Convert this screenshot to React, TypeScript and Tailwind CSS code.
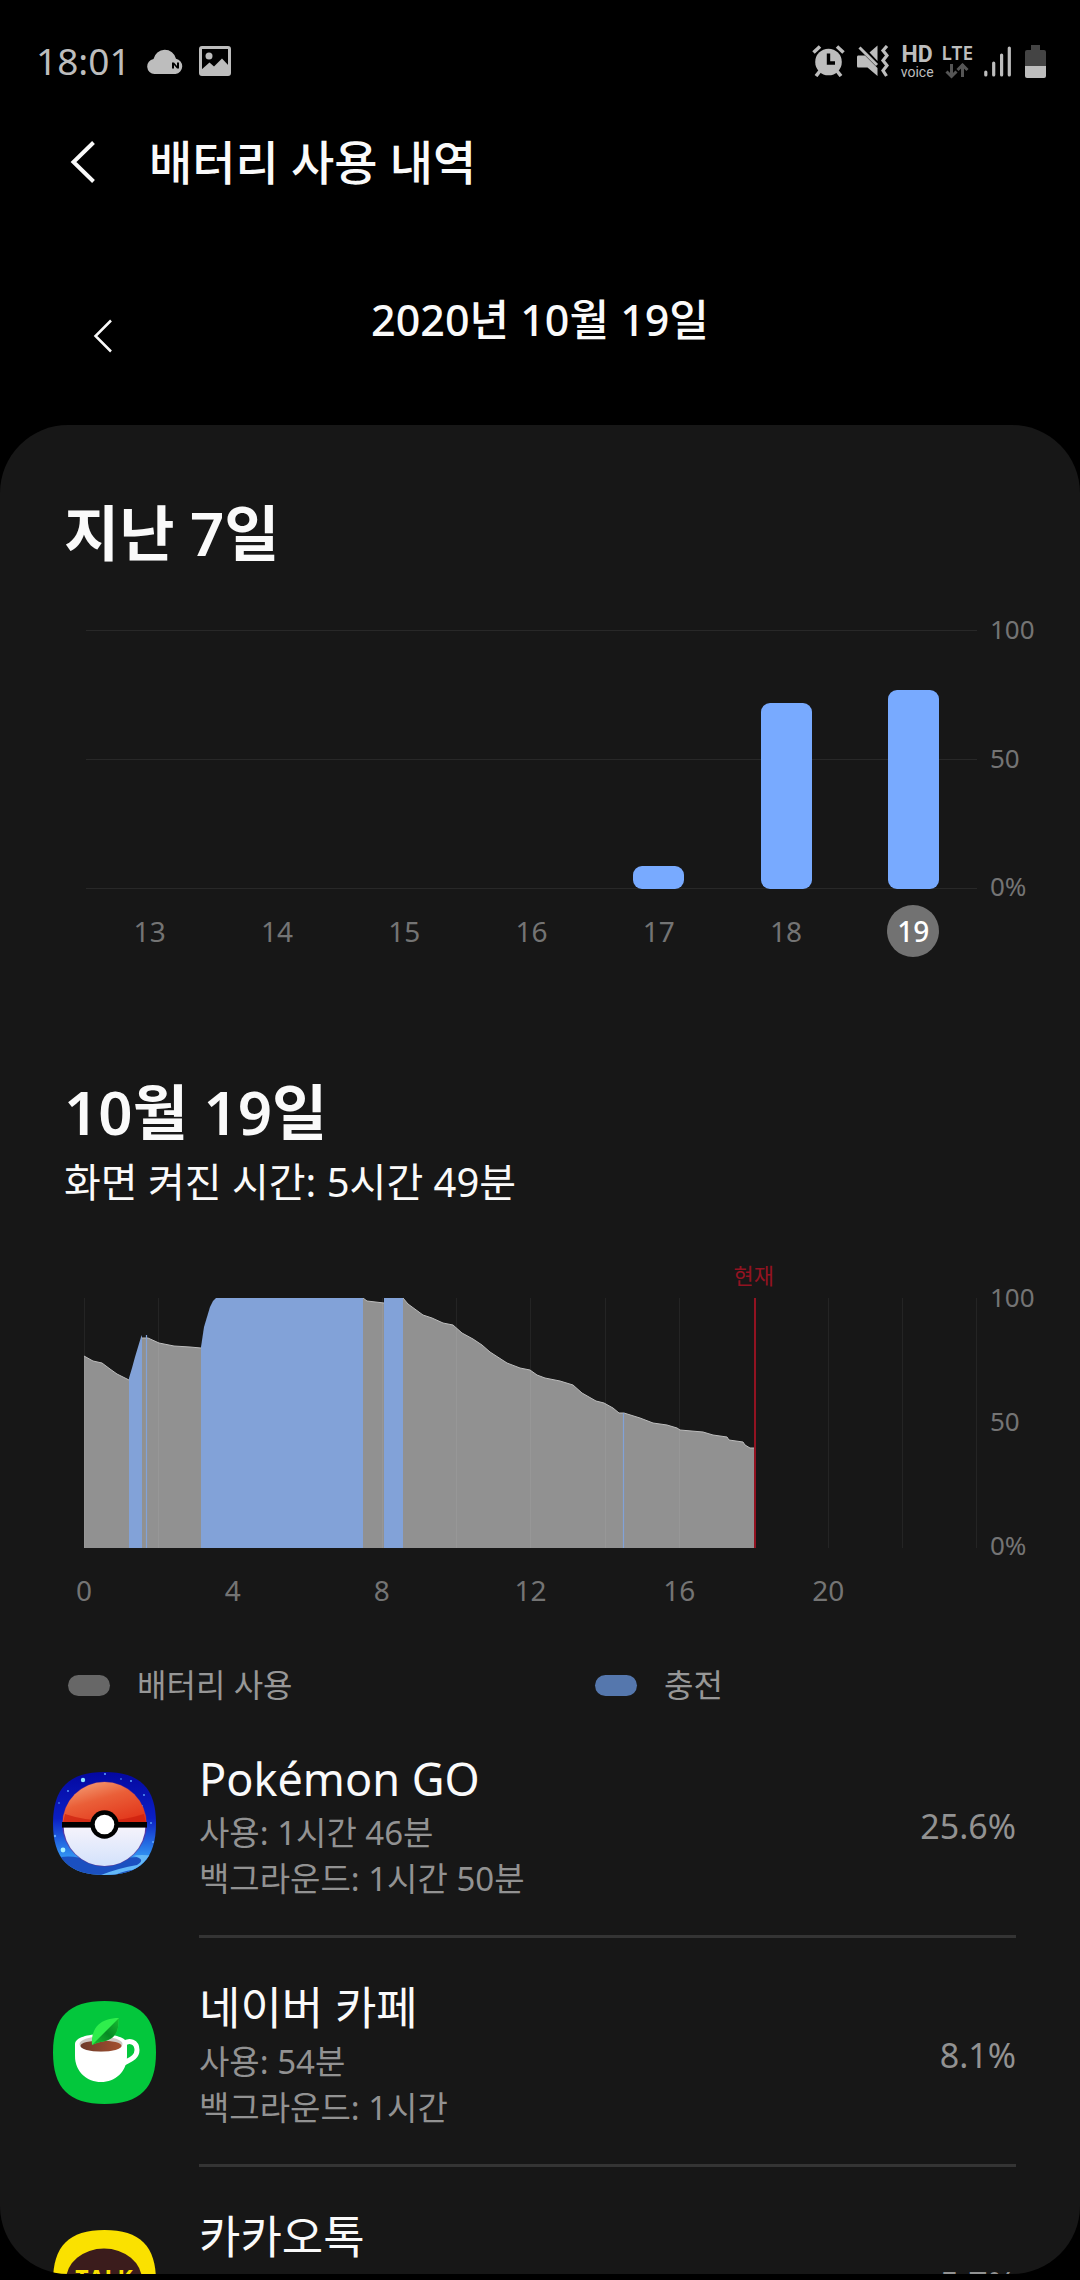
import type { ReactNode } from "react";

const days = [
  { day: 13, value: 0 },
  { day: 14, value: 0 },
  { day: 15, value: 0 },
  { day: 16, value: 0 },
  { day: 17, value: 9 },
  { day: 18, value: 72 },
  { day: 19, value: 77 },
];

const hourLabels = ["0", "4", "8", "12", "16", "20"];

const drain = [
  "0,58 9,63 18,65 26,71 33,76 45,82",
  "58,40 62,40 64,40 75,45 90,48 106,49 117,50",
  "279,0 283,3 300,5",
  "319,0 324,6 339,17 348,20 359,25 369,27 378,35 389,41 398,47 406,54 423,65 436,70 446,72 453,77 461,80 476,83 489,87 498,95 512,103 520,105 529,110 535,115 540,115 556,120 569,125 583,127 593,130 596,132 619,134 629,137 643,139 645,142 659,144 661,147 666,150 671,150",
];

const charge = [
  "45,80 48,70 51,59 54,49 57,39 58,37 58,40",
  "117,49 120,29 123,19 126,9 129,3 132,0 279,0",
  "300,0 319,0",
];

function area(points: string) {
  const list = points.split(" ");
  const first = list[0].split(",")[0];
  const last = list[list.length - 1].split(",")[0];
  return `${first},250 ${points} ${last},250`;
}

const squircle =
  "M51.5 0C87 0 103 16 103 51.5S87 103 51.5 103 0 87 0 51.5 16 0 51.5 0Z";

function PokemonIcon() {
  return (
    <svg viewBox="0 0 103 103" className="size-full" aria-hidden="true">
      <defs>
        <linearGradient id="sky" x1="0" y1="0" x2="0" y2="1">
          <stop offset="0" stopColor="#0408a0" />
          <stop offset="0.45" stopColor="#0b1fc4" />
          <stop offset="0.8" stopColor="#2f8df0" />
          <stop offset="1" stopColor="#4db4f8" />
        </linearGradient>
        <linearGradient id="ballTop" x1="0.1" y1="0" x2="0.7" y2="1">
          <stop offset="0" stopColor="#f5a57c" />
          <stop offset="0.45" stopColor="#ea5f38" />
          <stop offset="1" stopColor="#e2351a" />
        </linearGradient>
        <linearGradient id="ballBottom" x1="0" y1="0" x2="0" y2="1">
          <stop offset="0" stopColor="#f7f4fc" />
          <stop offset="1" stopColor="#d3e2fb" />
        </linearGradient>
        <clipPath id="pokeClip">
          <path d={squircle} />
        </clipPath>
      </defs>
      <g clipPath="url(#pokeClip)">
        <rect width="103" height="103" fill="url(#sky)" />
        <path d="M0 86Q20 82 34 88L103 84V103H0Z" fill="#1b50c0" />
        <path d="M103 84Q86 82 80 84Q94 87 84 93Q66 96 48 103H62Q72 98 88 97L70 103H92L103 92Z" fill="#62b8f8" />
        <g fill="#5ea8ff">
          <circle cx="30" cy="8" r="2.2" fill="#8fe6ff" />
          <circle cx="10" cy="78" r="2.4" fill="#a6f1ff" />
          <circle cx="52" cy="2" r="1" />
          <circle cx="68" cy="7" r="0.8" />
          <circle cx="78" cy="9" r="1" />
          <circle cx="15" cy="19" r="0.9" />
          <circle cx="91" cy="23" r="0.9" />
          <circle cx="89" cy="34" r="0.9" />
          <circle cx="6" cy="31" r="0.8" />
          <circle cx="2" cy="64" r="1.2" />
          <circle cx="98" cy="51" r="0.9" />
          <circle cx="100" cy="70" r="1" />
        </g>
      </g>
      <circle cx="51.5" cy="52" r="42.5" fill="#7c2c84" opacity="0.6" />
      <path d="M9.5 52a42 42 0 0 1 84 0Z" fill="url(#ballTop)" />
      <path d="M12 42Q51 55 91 42L93 51H10Z" fill="#c91c0c" opacity="0.65" />
      <path d="M10.5 53a41 41 0 0 0 82 0Z" fill="url(#ballBottom)" />
      <rect x="9" y="50" width="85" height="5.6" fill="#000" />
      <circle cx="51.5" cy="52.5" r="14.2" fill="#000" />
      <circle cx="51.5" cy="52.5" r="9.8" fill="#fff" />
    </svg>
  );
}

function CafeIcon() {
  return (
    <svg viewBox="0 0 103 103" className="size-full" aria-hidden="true">
      <defs>
        <linearGradient id="coffee" x1="0" y1="0" x2="1" y2="0">
          <stop offset="0" stopColor="#6e3a2b" />
          <stop offset="1" stopColor="#a4502f" />
        </linearGradient>
        <linearGradient id="leafDark" x1="0" y1="1" x2="1" y2="0">
          <stop offset="0" stopColor="#17c22f" />
          <stop offset="0.5" stopColor="#078a24" />
          <stop offset="1" stopColor="#16bf31" />
        </linearGradient>
      </defs>
      <path d={squircle} fill="#03c73c" />
      <path d="M71 43C76 38 84 41 84 49C84 57 76 59 71 62" fill="none" stroke="#fff" strokeWidth="5" />
      <path d="M22 43C22 30 74 30 74 43V55C74 71 62 81 48 81S22 71 22 55Z" fill="#fff" />
      <ellipse cx="48" cy="43" rx="21.5" ry="7.5" fill="#cfc8c4" />
      <ellipse cx="48" cy="45" rx="20.5" ry="5.5" fill="url(#coffee)" />
      <path d="M39 44C38 26 48 17 66 17C65 25 66 30 60 36C55 41 46 40 39 44Z" fill="#2fee4c" />
      <path d="M39 44L66 17C65 25 66 30 60 36C55 41 46 40 39 44Z" fill="url(#leafDark)" />
    </svg>
  );
}

function TalkIcon() {
  return (
    <svg viewBox="0 0 103 103" className="size-full" aria-hidden="true">
      <path d={squircle} fill="#fae100" />
      <ellipse cx="51" cy="50" rx="38" ry="31.5" fill="#3b1c1c" />
      <path d="M34 74L30 92L52 78Z" fill="#3b1c1c" />
      <text
        x="51"
        y="57"
        textAnchor="middle"
        fontFamily="Open Sans, sans-serif"
        fontSize="23"
        fontWeight="700"
        fill="#fae100"
      >
        TALK
      </text>
    </svg>
  );
}

const apps: { name: string; used: string; background: string; share: string; icon: ReactNode }[] = [
  {
    name: "Pokémon GO",
    used: "사용: 1시간 46분",
    background: "백그라운드: 1시간 50분",
    share: "25.6%",
    icon: <PokemonIcon />,
  },
  {
    name: "네이버 카페",
    used: "사용: 54분",
    background: "백그라운드: 1시간",
    share: "8.1%",
    icon: <CafeIcon />,
  },
  {
    name: "카카오톡",
    used: "사용: 28분",
    background: "백그라운드: 12분",
    share: "5.7%",
    icon: <TalkIcon />,
  },
];

function StatusBar() {
  return (
    <div className="flex h-[122px] shrink-0 items-center justify-between pl-9 pr-[34px] text-[#bdbdbd]">
      <div className="flex items-center">
        <span className="text-[37px] leading-[48px]">18:01</span>
        <svg className="ml-4 h-[26px] w-9" viewBox="0 0 36 26" aria-hidden="true">
          <path
            d="M7.5 26A7.5 7.5 0 0 1 6.500 11.100A11.500 11.500 0 0 1 29 10.800A7.700 7.700 0 0 1 28.500 26Z"
            fill="currentColor"
          />
          <path d="M25 14.500H27L30 18V14.500H32V20.500H30L27 17V20.500H25Z" fill="#000" />
        </svg>
        <svg className="ml-4 h-[30px] w-8" viewBox="0 0 32 30" aria-hidden="true">
          <rect x="1.500" y="1.500" width="29" height="27" rx="1.500" fill="none" stroke="currentColor" strokeWidth="3" />
          <circle cx="10" cy="10" r="3.500" fill="currentColor" />
          <path d="M2 24L10.500 16.500L15 20.500L23 12.500L30 20V28H2Z" fill="currentColor" />
        </svg>
      </div>
      <div className="flex items-center">
        <svg className="h-8 w-[33px]" viewBox="0 0 33 32" fill="none" stroke="currentColor" aria-hidden="true">
          <circle cx="16.500" cy="17" r="13.300" fill="currentColor" stroke="none" />
          <path d="M1.500 7.500L8 1.500M31.500 7.500L25 1.500" strokeWidth="3.600" />
          <path d="M8 26L4 31M25 26L29 31" strokeWidth="3.600" />
          <path d="M16.500 8.500V18H23" stroke="#000" strokeWidth="3.400" />
        </svg>
        <svg className="ml-3 h-8 w-8" viewBox="0 0 32 32" aria-hidden="true">
          <path d="M1 10.500H8L20.500 23V31L10.500 22.500H1Q0 22.500 0 21V12Q0 10.500 1 10.500Z" fill="currentColor" />
          <path d="M2.500 2.500L20 20" stroke="currentColor" strokeWidth="3" />
          <path d="M20.500 0.500V16L12.500 7.500Z" fill="currentColor" />
          <path
            d="M30 1L26 5.500L30 10.500L26 15.500L30 20.500L26 25.500L29.500 31"
            fill="none"
            stroke="currentColor"
            strokeWidth="3.200"
          />
        </svg>
        <div className="ml-3 flex flex-col items-center font-[Roboto]">
          <span className="text-[23px] font-bold leading-[22px]">HD</span>
          <span className="text-[14px] leading-3">voice</span>
        </div>
        <div className="ml-2 flex flex-col items-center">
          <span className="text-[19px] font-semibold leading-[18px]">LTE</span>
          <svg className="mt-px h-4 w-6" viewBox="0 0 24 16" fill="none" stroke="#555" strokeWidth="3" aria-hidden="true">
            <path d="M6.500 1V14M1.500 8.500L6.500 13.500L11.500 8.500M17.500 14V1M12.500 7L17.500 2L22.500 7" />
          </svg>
        </div>
        <svg className="ml-[11px] h-[31px] w-[27px]" viewBox="0 0 27 31" stroke="currentColor" strokeWidth="3.200" strokeLinecap="round" aria-hidden="true">
          <path d="M1.800 26V29M9.700 17V29M17.600 9V29M25.300 2V29" />
        </svg>
        <svg className="ml-[14px] h-[33px] w-[21px]" viewBox="0 0 21 33" aria-hidden="true">
          <path d="M6 0H15V5H19Q21 5 21 7V21H0V7Q0 5 2 5H6Z" fill="#444" />
          <path d="M0 21H21V31Q21 33 19 33H2Q0 33 0 31Z" fill="currentColor" />
        </svg>
      </div>
    </div>
  );
}

function ScaleLabels() {
  return (
    <div className="-mb-3 -mt-4 flex w-[103px] shrink-0 flex-col justify-between pl-[13px] text-[26px] leading-[30px] text-[#747474]">
      <span>100</span>
      <span>50</span>
      <span>0%</span>
    </div>
  );
}

function WeekChart() {
  return (
    <div className="mt-[61px] pl-[86px]">
      <div className="flex h-[259px]">
        <div className="relative flex-1">
          <div className="absolute inset-0 flex flex-col justify-between">
            <div className="h-px bg-[#282828]" />
            <div className="h-px bg-[#282828]" />
            <div className="h-px bg-[#282828]" />
          </div>
          <div className="relative grid h-full grid-cols-7">
            {days.map(({ day, value }) => (
              <div key={day} className="flex h-full items-end justify-center">
                {value > 0 && (
                  <div className="w-[51px] rounded-[9px] bg-[#78aaff]" style={{ height: `${value}%` }} />
                )}
              </div>
            ))}
          </div>
        </div>
        <ScaleLabels />
      </div>
      <div className="mr-[103px] mt-4 grid grid-cols-7 justify-items-center text-[28px] text-[#747474]">
        {days.map(({ day }) => (
          <button
            key={day}
            type="button"
            className={
              day === 19
                ? "size-[52px] rounded-full bg-[#727272] font-medium text-white"
                : "size-[52px] rounded-full"
            }
          >
            {day}
          </button>
        ))}
      </div>
    </div>
  );
}

function DayChart() {
  return (
    <div className="mt-[86px] pl-[84px]">
      <div className="flex h-[250px]">
        <div className="relative flex-1">
          <svg className="h-full w-full" viewBox="0 0 893 250" preserveAspectRatio="none" aria-hidden="true">
            {drain.map((p) => (
              <g key={p}>
                <polygon points={area(p)} fill="#919191" />
                <polyline points={p} fill="none" stroke="#bcbcbc" strokeWidth="1" />
              </g>
            ))}
            {[0, 1, 2, 3, 4, 5, 6, 7, 8, 9, 10, 11, 12].map((n) => (
              <rect key={n} x={Math.round(n * 74.4) - (n === 12 ? 1 : 0)} y="0" width="1" height="250" fill="#fff" opacity="0.06" />
            ))}
            {charge.map((p) => (
              <polygon key={p} points={area(p)} fill="#82a2d8" />
            ))}
            <path d="M62.500 37V250M539.500 115V250" stroke="#82a2d8" strokeWidth="1.200" />
            <rect x="670" y="0" width="2" height="250" fill="#921321" />
          </svg>
          <span className="absolute bottom-full left-3/4 mb-2 -translate-x-1/2 text-[22px] leading-[30px] text-[#921321]">
            현재
          </span>
        </div>
        <ScaleLabels />
      </div>
      <div className="mr-[103px] mt-[22px] grid grid-cols-6 text-[28px] leading-[40px] text-[#747474]">
        {hourLabels.map((h) => (
          <div key={h} className="flex w-0 justify-center">
            {h}
          </div>
        ))}
      </div>
    </div>
  );
}

export default function App() {
  return (
    <div className="flex h-screen flex-col bg-black pb-[6px] font-['Noto_Sans','Noto_Sans_CJK_KR',sans-serif] text-[#fafafa]">
      <StatusBar />
      <header className="flex h-20 shrink-0 items-center">
        <button type="button" aria-label="뒤로" className="ml-[53px] flex size-[60px] items-center justify-center">
          <svg className="h-[42px] w-[26px]" viewBox="0 0 26 42" fill="none" stroke="currentColor" strokeWidth="4" aria-hidden="true">
            <path d="M23.500 1.500L3.500 21L23.500 40.500" />
          </svg>
        </button>
        <h1 className="ml-9 text-[47px] font-medium leading-[60px]">배터리 사용 내역</h1>
      </header>
      <div className="grid h-[223px] shrink-0 grid-cols-[1fr_auto_1fr] items-start pt-[88px]">
        <button type="button" aria-label="이전" className="ml-[73px] mt-4 flex size-[60px] items-center justify-center">
          <svg className="h-[34px] w-5" viewBox="0 0 20 34" fill="none" stroke="currentColor" strokeWidth="2.500" aria-hidden="true">
            <path d="M18 1.500L2.500 17L18 32.500" />
          </svg>
        </button>
        <p className="text-[43px] font-medium leading-[60px]">2020년 10월 19일</p>
      </div>
      <main className="min-h-0 flex-1 overflow-y-auto rounded-[68px] bg-[#171717] pt-[72px] [scrollbar-width:none]">
        <h2 className="pl-16 text-[60px] font-semibold leading-[72px]">지난 7일</h2>
        <WeekChart />
        <h2 className="mt-[119px] pl-16 text-[60px] font-semibold leading-[72px]">10월 19일</h2>
        <p className="mt-1 pl-16 text-[40px] leading-[60px]">화면 켜진 시간: 5시간 49분</p>
        <DayChart />
        <div className="mt-[52px] grid h-[46px] grid-cols-2 items-center pl-[68px] text-[32px] leading-[46px] text-[#979797]">
          <div className="flex items-center gap-[27px]">
            <span className="h-[21px] w-[42px] rounded-full bg-[#676767]" />
            배터리 사용
          </div>
          <div className="ml-[21px] flex items-center gap-[27px]">
            <span className="h-[21px] w-[42px] rounded-full bg-[#5577ad]" />
            충전
          </div>
        </div>
        <ul className="pl-[53px] pr-16 pt-px">
          {apps.map((app) => (
            <li key={app.name} className="flex items-start gap-[43px]">
              <div className="mt-[63px] size-[103px] shrink-0">{app.icon}</div>
              <div className="flex flex-1 items-center justify-between border-b-[3px] border-[#343434] pb-[33px] pt-10">
                <div>
                  <h3 className="text-[45px] leading-[60px]">{app.name}</h3>
                  <p className="mt-px text-[33px] leading-[46px] text-[#929292]">{app.used}</p>
                  <p className="text-[33px] leading-[46px] text-[#929292]">{app.background}</p>
                </div>
                <span className="text-[34px] leading-[46px] text-[#929292]">{app.share}</span>
              </div>
            </li>
          ))}
        </ul>
      </main>
    </div>
  );
}
